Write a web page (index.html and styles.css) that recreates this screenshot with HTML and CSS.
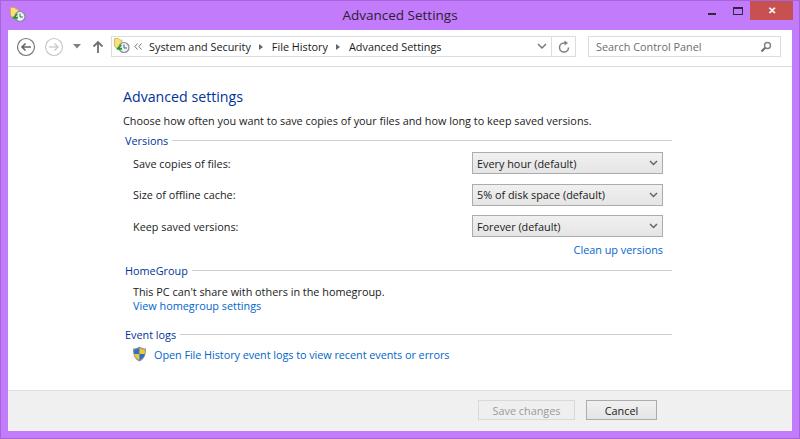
FILE: index.html
```html
<!DOCTYPE html>
<html lang="en">
<head>
<meta charset="utf-8">
<title>Advanced Settings</title>
<link rel="stylesheet" href="styles.css">
</head>
<body>
<div class="window">
  <header class="titlebar">
    <svg class="app-icon" width="18" height="18" viewBox="0 0 18 18"><path d="M.5.5h4l1.500 1.500h2v8H2L.5 8z" fill="#f8e07a" stroke="#c9a93c" stroke-width=".7"/><circle cx="10" cy="9.500" r="5" fill="#eef2f4" stroke="#7f8c94" stroke-width="1.200"/><path d="M10 6.500v3.500h3" fill="none" stroke="#55626a"/><path d="M2.500 10.500L7 6.500l1 1-2.300 2.300H8v2H3z" fill="#1f9e2c"/></svg>
    <div class="title">Advanced Settings</div>
    <div class="caption">
      <span class="min"></span>
      <span class="max"></span>
      <span class="close">✕</span>
    </div>
  </header>
  <div class="client">
    <nav class="toolbar">
      <svg class="nav-btn" width="20" height="20" viewBox="0 0 20 20"><circle cx="10" cy="10" r="8.500" fill="#fff" stroke="#777" stroke-width="1.200"/><path d="M15 10H6M9.500 6.500L6 10l3.500 3.500" fill="none" stroke="#666" stroke-width="1.600"/></svg>
      <svg class="nav-btn next" width="20" height="20" viewBox="0 0 20 20"><circle cx="10" cy="10" r="8.500" fill="#fff" stroke="#c8c8c8" stroke-width="1.200"/><path d="M5 10h9M10.500 6.500L14 10l-3.500 3.500" fill="none" stroke="#cfcfcf" stroke-width="1.600"/></svg>
      <svg class="recent" width="8" height="5" viewBox="0 0 8 5"><path d="M0 0h8L4 4.500z" fill="#808080"/></svg>
      <svg class="up" width="12" height="14" viewBox="0 0 12 14"><path d="M6 13V2M1.500 6.500L6 2l4.500 4.500" fill="none" stroke="#707070" stroke-width="1.800"/></svg>
      <div class="address">
        <svg class="crumb-icon" width="18" height="18" viewBox="0 0 18 18"><path d="M1.500.5h4L7 2h2v8H3L1.500 8z" fill="#f8e07a" stroke="#c9a93c" stroke-width=".7"/><circle cx="11" cy="9.500" r="5" fill="#eef2f4" stroke="#7f8c94" stroke-width="1.200"/><path d="M11 6.500v3.500h3" fill="none" stroke="#55626a"/><path d="M3.500 10.500L8 6.500l1 1-2.300 2.300H9v2H4z" fill="#1f9e2c"/></svg>
        <svg class="chev" width="8" height="7" viewBox="0 0 8 7"><path d="M3.500.5L.8 3.500l2.700 3M7.500.5L4.800 3.500l2.700 3" fill="none" stroke="#777" stroke-width="1"/></svg>
        <span class="crumb">System and Security</span>
        <span class="sep"></span>
        <span class="crumb">File History</span>
        <span class="sep"></span>
        <span class="crumb">Advanced Settings</span>
        <span class="spacer"></span>
        <svg class="drop" width="10" height="7" viewBox="0 0 10 7"><path d="M1 1l4 4 4-4" fill="none" stroke="#777" stroke-width="1.500"/></svg>
        <span class="refresh">
          <svg width="14" height="14" viewBox="0 0 14 14"><path d="M11.500 7.500A4.500 4.500 0 1 1 7 3h2" fill="none" stroke="#808080" stroke-width="1.500"/><path d="M7.500 0.500L11 3 7.500 5.500z" fill="#808080"/></svg>
        </span>
      </div>
      <div class="search">
        <span class="search-text">Search Control Panel</span>
        <svg width="12" height="12" viewBox="0 0 12 12"><circle cx="7.500" cy="4.500" r="3" fill="none" stroke="#808080" stroke-width="1.400"/><path d="M5.200 6.800L1.500 10.500" stroke="#707070" stroke-width="2"/></svg>
      </div>
    </nav>
    <main class="content">
      <h1>Advanced settings</h1>
      <p class="intro">Choose how often you want to save copies of your files and how long to keep saved versions.</p>

      <section class="group versions">
        <div class="group-head"><span>Versions</span><i></i></div>
        <div class="row"><label>Save copies of files:</label><div class="select">Every hour (default)<svg width="9" height="6" viewBox="0 0 9 6"><path d="M1 1l3.500 3.500L8 1" fill="none" stroke="#666" stroke-width="1.500"/></svg></div></div>
        <div class="row"><label>Size of offline cache:</label><div class="select">5% of disk space (default)<svg width="9" height="6" viewBox="0 0 9 6"><path d="M1 1l3.500 3.500L8 1" fill="none" stroke="#666" stroke-width="1.500"/></svg></div></div>
        <div class="row"><label>Keep saved versions:</label><div class="select">Forever (default)<svg width="9" height="6" viewBox="0 0 9 6"><path d="M1 1l3.500 3.500L8 1" fill="none" stroke="#666" stroke-width="1.500"/></svg></div></div>
        <a class="link cleanup">Clean up versions</a>
      </section>

      <section class="group homegroup">
        <div class="group-head"><span>HomeGroup</span><i></i></div>
        <p class="note">This PC can't share with others in the homegroup.</p>
        <a class="link indent">View homegroup settings</a>
      </section>

      <section class="group logs">
        <div class="group-head"><span>Event logs</span><i></i></div>
        <div class="log-row">
          <svg width="15" height="16" viewBox="0 0 15 16"><path d="M7.500.5C9.500 2 11.500 2.500 14 2.500c0 6-1 10.500-6.500 13C2 13 1 8.500 1 2.500 3.500 2.500 5.500 2 7.500.5z" fill="#8b8f94"/><path d="M7.500 2v6H2.300c0-1.500-.2-3-.2-4.300 2 0 3.700-.5 5.400-1.700z" fill="#2f6fc8"/><path d="M7.500 2c1.700 1.200 3.400 1.700 5.400 1.700 0 1.300-.1 2.800-.2 4.300H7.500z" fill="#f4c92e"/><path d="M2.300 8h5.200v6C4 12.300 2.700 10.500 2.300 8z" fill="#f4c92e"/><path d="M7.500 8h5.200c-.4 2.500-1.700 4.300-5.200 6z" fill="#2f6fc8"/></svg>
          <a class="link log-link">Open File History event logs to view recent events or errors</a>
        </div>
      </section>
    </main>
    <footer class="footer">
      <button class="btn disabled" type="button">Save changes</button>
      <button class="btn" type="button">Cancel</button>
    </footer>
  </div>
</div>
</body>
</html>
```
FILE: styles.css
```css
* { box-sizing: border-box; }
html, body { margin: 0; padding: 0; }
body {
  width: 800px;
  height: 439px;
  overflow: hidden;
  font-family: "Open Sans", "Noto Sans", sans-serif;
  font-size: 10.85px;
  color: #1a1a1a;
}
.window {
  width: 800px;
  height: 439px;
  display: flex;
  flex-direction: column;
  background: #c27bfb;
  border: 1px solid #a664d8;
}
.titlebar {
  height: 29px;
  display: flex;
  align-items: flex-start;
  position: relative;
  flex: none;
}
.app-icon { margin: 6px 0 0 9px; }
.title {
  position: absolute;
  left: 0;
  right: 0;
  top: 5px;
  text-align: center;
  font-size: 13.5px;
  line-height: 18px;
  color: #2a2030;
}
.caption {
  margin-left: auto;
  display: flex;
  align-items: flex-start;
  margin-right: 6px;
}
.min {
  width: 8px;
  height: 2px;
  background: #33243f;
  margin: 12px 17px 0 0;
}
.max {
  width: 10px;
  height: 8px;
  border: 1px solid #33243f;
  border-top-width: 2px;
  margin: 6px 7px 0 0;
}
.close {
  width: 43px;
  height: 19px;
  background: #c75050;
  color: #fff;
  font-size: 10px;
  line-height: 19px;
  text-align: center;
  font-weight: 700;
}
.client {
  flex: 1;
  margin: 0 7px 7px 7px;
  background: #fff;
  display: flex;
  flex-direction: column;
  min-height: 0;
}
.toolbar {
  height: 37px;
  flex: none;
  display: flex;
  align-items: center;
  padding: 0 9px 3px 8px;
  background: #fff;
  border-bottom: 1px solid #dadada;
}
.nav-btn { margin-right: 8px; }
.recent { margin: 0 11px 0 1px; }
.up { margin: 0 7px 0 0; }
.address {
  width: 465px;
  height: 21px;
  border: 1px solid #dcdcdc;
  display: flex;
  align-items: center;
  color: #1a1a1a;
  padding-left: 1px;
}
.crumb-icon { flex: none; }
.chev { margin: 0 7px 0 3px; flex: none; }
.sep {
  width: 0;
  height: 0;
  border-left: 4px solid #666;
  border-top: 3px solid transparent;
  border-bottom: 3px solid transparent;
  margin: 0 8.500px;
}
.spacer { flex: 1; }
.drop { margin-right: 4px; }
.refresh {
  width: 24px;
  height: 19px;
  border-left: 1px solid #dcdcdc;
  display: flex;
  align-items: center;
  justify-content: center;
}
.search {
  width: 193px;
  height: 21px;
  margin-left: 12px;
  border: 1px solid #dcdcdc;
  display: flex;
  align-items: center;
  justify-content: space-between;
  padding: 0 8px 0 7px;
  color: #6d6d6d;
}
.content {
  flex: 1;
  min-height: 0;
  padding: 20px 0 0 115px;
  width: 664px;
}
h1 {
  margin: 0;
  font-size: 14.2px;
  font-weight: 400;
  line-height: 20px;
  color: #003399;
}
.intro { margin: 6px 0 0; line-height: 15px; }
.group { margin: 0; }
.group-head {
  display: flex;
  align-items: center;
  height: 16px;
  padding-left: 2px;
  color: #003399;
}
.group-head i {
  flex: 1;
  height: 1px;
  background: #cfcfcf;
  margin-left: 4px;
}
.versions { margin-top: 4px; }
.row {
  display: flex;
  align-items: center;
  justify-content: space-between;
  height: 22px;
  width: 540px;
  padding-left: 10px;
  margin-top: 9.500px;
}
.row:nth-of-type(2) { margin-top: 4px; }
.select {
  width: 191px;
  height: 22px;
  border: 1px solid #acacac;
  background: linear-gradient(#f0f0f0, #e5e5e5);
  display: flex;
  align-items: center;
  justify-content: space-between;
  padding: 0 4px;
}
.link { color: #0066cc; }
.cleanup {
  display: block;
  width: 540px;
  text-align: right;
  line-height: 15px;
  margin-top: 5px;
}
.homegroup { margin-top: 5px; }
.note { margin: 7px 0 0 10px; line-height: 13px; }
.indent { display: block; margin-left: 10px; line-height: 15px; }
.logs { margin-top: 13px; }
.log-row {
  display: flex;
  align-items: center;
  gap: 7px;
  margin: 4px 0 0 9px;
  line-height: 15px;
}
.log-link { letter-spacing: -.05px; }
.footer {
  height: 41px;
  flex: none;
  background: #f0f0f0;
  border-top: 1px solid #dfdfdf;
  display: flex;
  justify-content: flex-end;
  align-items: center;
  gap: 11px;
  padding: 0 135px 2px 0;
}
.btn {
  width: 71px;
  height: 20px;
  border: 1px solid #acacac;
  background: linear-gradient(#f0f0f0, #e5e5e5);
  font: inherit;
  color: #1a1a1a;
  padding: 0;
}
.btn.disabled {
  width: 97px;
  background: #efefef;
  border-color: #d9d9d9;
  color: #9a9a9a;
}
```
